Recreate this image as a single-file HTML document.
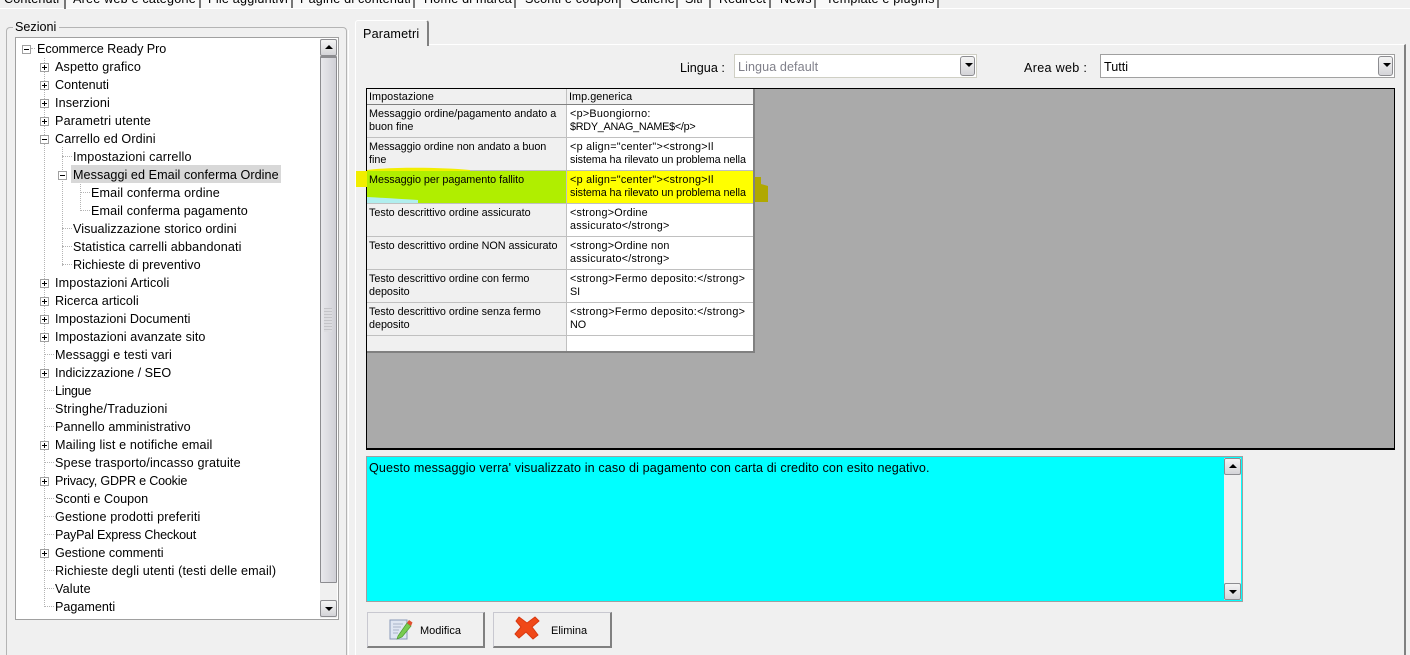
<!DOCTYPE html>
<html><head><meta charset="utf-8">
<style>
html,body{margin:0;padding:0;width:1410px;height:655px;overflow:hidden}
body{background:#f0f0f0;position:relative;font-family:"Liberation Sans",sans-serif;font-size:12px;color:#000}
.a{position:absolute;box-sizing:border-box}
.t{position:absolute;white-space:nowrap;line-height:14px;font-size:12.6px;transform:translateY(1px)}
.t.tr{transform:none;background:#fff;padding:0 1px;height:17px;line-height:19px}
.c{position:absolute;font-size:10.8px;line-height:13px;white-space:pre;box-sizing:border-box;padding-left:2px;color:#000;letter-spacing:-.03px;transform:translateY(1px)}
.exp{position:absolute;width:9px;height:9px;border:1px solid #a0a0a0;background:#fff;box-sizing:border-box}
.exp:before{content:"";position:absolute;left:1px;top:3px;width:5px;height:1px;background:#000}
.exp.p:after{content:"";position:absolute;left:3px;top:1px;width:1px;height:5px;background:#000}
.dh{position:absolute;height:1px;border-top:1px dotted #b4b4b4}
.dv{position:absolute;width:1px;border-left:1px dotted #b4b4b4}
.sb{position:absolute;width:17px;height:17px;box-sizing:border-box;border:1px solid #8c8c90;border-radius:2px;background:linear-gradient(#f4f4f4,#d4d4d8)}
.up:after{content:"";position:absolute;left:4px;top:5px;border:4px solid transparent;border-top:0;border-bottom:4px solid #000}
.dn:after{content:"";position:absolute;left:4px;top:6px;border:4px solid transparent;border-bottom:0;border-top:4px solid #000}
</style></head><body>

<!-- top tabs -->
<div class="a" style="left:0;top:8px;width:1410px;height:1px;background:#fff"></div>
<div class="a" style="left:65px;top:0;width:873px;height:8px;background:#f9f9f9"></div>
<div class="a" style="left:64px;top:0;width:2px;height:9px;background:#777"></div>
<div class="a" style="left:199px;top:0;width:2px;height:8px;background:#777"></div>
<div class="a" style="left:291px;top:0;width:2px;height:8px;background:#777"></div>
<div class="a" style="left:413px;top:0;width:2px;height:8px;background:#777"></div>
<div class="a" style="left:514px;top:0;width:2px;height:8px;background:#777"></div>
<div class="a" style="left:619px;top:0;width:2px;height:8px;background:#777"></div>
<div class="a" style="left:676px;top:0;width:2px;height:8px;background:#777"></div>
<div class="a" style="left:709px;top:0;width:2px;height:8px;background:#777"></div>
<div class="a" style="left:769px;top:0;width:2px;height:8px;background:#777"></div>
<div class="a" style="left:814px;top:0;width:2px;height:8px;background:#777"></div>
<div class="a" style="left:937px;top:0;width:2px;height:8px;background:#777"></div>
<div class="t" style="left:4px;top:-9px;letter-spacing:.15px">Contenuti</div>
<div class="t" style="left:73px;top:-9px;letter-spacing:.2px">Aree web e categorie</div>
<div class="t" style="left:208px;top:-9px;letter-spacing:.2px">File aggiuntivi</div>
<div class="t" style="left:300px;top:-9px;letter-spacing:.2px">Pagine di contenuti</div>
<div class="t" style="left:424px;top:-9px;letter-spacing:.2px">Home di marca</div>
<div class="t" style="left:525px;top:-9px;letter-spacing:.2px">Sconti e coupon</div>
<div class="t" style="left:630px;top:-9px;letter-spacing:.2px">Gallerie</div>
<div class="t" style="left:685px;top:-9px">Siti</div>
<div class="t" style="left:719px;top:-9px">Redirect</div>
<div class="t" style="left:780px;top:-9px">News</div>
<div class="t" style="left:826px;top:-9px;letter-spacing:.2px">Template e plugins</div>

<!-- left group box -->
<div class="a" style="left:6px;top:27px;width:341px;height:628px;border:1px solid #b4b4b4;border-bottom:0;border-radius:4px 4px 0 0"></div>
<div class="a" style="left:348px;top:30px;width:1px;height:625px;background:#fff"></div>
<div class="t" style="left:13px;top:19px;background:#f0f0f0;padding:0 3px 0 2px">Sezioni</div>

<!-- tree -->
<div class="a" style="left:15px;top:37px;width:324px;height:583px;border:1px solid #a0a0a0;background:#fff"></div>
<div class="dv" style="left:44px;top:54px;height:553px"></div>
<div class="dv" style="left:62px;top:146px;height:120px"></div>
<div class="dv" style="left:80px;top:182px;height:29px"></div>
<div class="dh" style="left:31px;top:48px;width:6px"></div>
<div class="dh" style="left:44px;top:390px;width:10px"></div>
<div class="dh" style="left:44px;top:408px;width:10px"></div>
<div class="dh" style="left:44px;top:426px;width:10px"></div>
<div class="dh" style="left:44px;top:462px;width:10px"></div>
<div class="dh" style="left:44px;top:498px;width:10px"></div>
<div class="dh" style="left:44px;top:516px;width:10px"></div>
<div class="dh" style="left:44px;top:534px;width:10px"></div>
<div class="dh" style="left:44px;top:570px;width:10px"></div>
<div class="dh" style="left:44px;top:588px;width:10px"></div>
<div class="dh" style="left:44px;top:606px;width:10px"></div>
<div class="dh" style="left:44px;top:354px;width:10px"></div>
<div class="dh" style="left:62px;top:156px;width:10px"></div>
<div class="dh" style="left:62px;top:228px;width:10px"></div>
<div class="dh" style="left:62px;top:246px;width:10px"></div>
<div class="dh" style="left:62px;top:264px;width:10px"></div>
<div class="dh" style="left:80px;top:192px;width:10px"></div>
<div class="dh" style="left:80px;top:210px;width:10px"></div>

<div class="exp" style="left:22px;top:45px"></div>
<div class="exp p" style="left:40px;top:63px"></div>
<div class="exp p" style="left:40px;top:81px"></div>
<div class="exp p" style="left:40px;top:99px"></div>
<div class="exp p" style="left:40px;top:117px"></div>
<div class="exp" style="left:40px;top:135px"></div>
<div class="exp" style="left:58px;top:171px"></div>
<div class="exp p" style="left:40px;top:279px"></div>
<div class="exp p" style="left:40px;top:297px"></div>
<div class="exp p" style="left:40px;top:315px"></div>
<div class="exp p" style="left:40px;top:333px"></div>
<div class="exp p" style="left:40px;top:369px"></div>
<div class="exp p" style="left:40px;top:441px"></div>
<div class="exp p" style="left:40px;top:477px"></div>
<div class="exp p" style="left:40px;top:549px"></div>

<div class="t tr" style="left:36px;top:40px;letter-spacing:-.05px">Ecommerce Ready Pro</div>
<div class="t tr" style="left:54px;top:58px;letter-spacing:.13px">Aspetto grafico</div>
<div class="t tr" style="left:54px;top:76px">Contenuti</div>
<div class="t tr" style="left:54px;top:94px;letter-spacing:.1px">Inserzioni</div>
<div class="t tr" style="left:54px;top:112px;letter-spacing:.18px">Parametri utente</div>
<div class="t tr" style="left:54px;top:130px;letter-spacing:.11px">Carrello ed Ordini</div>
<div class="t tr" style="left:72px;top:148px;letter-spacing:.15px">Impostazioni carrello</div>
<div class="t tr" style="left:71px;top:165px;height:18px;line-height:21px;width:210px;box-sizing:border-box;background:#d8d8d8;padding-left:2px;letter-spacing:.06px">Messaggi ed Email conferma Ordine</div>
<div class="t tr" style="left:90px;top:184px;letter-spacing:.14px">Email conferma ordine</div>
<div class="t tr" style="left:90px;top:202px;letter-spacing:.12px">Email conferma pagamento</div>
<div class="t tr" style="left:72px;top:220px;letter-spacing:.07px">Visualizzazione storico ordini</div>
<div class="t tr" style="left:72px;top:238px;letter-spacing:.13px">Statistica carrelli abbandonati</div>
<div class="t tr" style="left:72px;top:256px;letter-spacing:.04px">Richieste di preventivo</div>
<div class="t tr" style="left:54px;top:274px;letter-spacing:.15px">Impostazioni Articoli</div>
<div class="t tr" style="left:54px;top:292px;letter-spacing:.07px">Ricerca articoli</div>
<div class="t tr" style="left:54px;top:310px;letter-spacing:.05px">Impostazioni Documenti</div>
<div class="t tr" style="left:54px;top:328px;letter-spacing:.08px">Impostazioni avanzate sito</div>
<div class="t tr" style="left:54px;top:346px;letter-spacing:.1px">Messaggi e testi vari</div>
<div class="t tr" style="left:54px;top:364px">Indicizzazione / SEO</div>
<div class="t tr" style="left:54px;top:382px;letter-spacing:-.3px">Lingue</div>
<div class="t tr" style="left:54px;top:400px;letter-spacing:.2px">Stringhe/Traduzioni</div>
<div class="t tr" style="left:54px;top:418px;letter-spacing:.09px">Pannello amministrativo</div>
<div class="t tr" style="left:54px;top:436px;letter-spacing:.14px">Mailing list e notifiche email</div>
<div class="t tr" style="left:54px;top:454px;letter-spacing:.16px">Spese trasporto/incasso gratuite</div>
<div class="t tr" style="left:54px;top:472px;letter-spacing:-.22px">Privacy, GDPR e Cookie</div>
<div class="t tr" style="left:54px;top:490px">Sconti e Coupon</div>
<div class="t tr" style="left:54px;top:508px;letter-spacing:.15px">Gestione prodotti preferiti</div>
<div class="t tr" style="left:54px;top:526px;letter-spacing:-.2px">PayPal Express Checkout</div>
<div class="t tr" style="left:54px;top:544px">Gestione commenti</div>
<div class="t tr" style="left:54px;top:562px;letter-spacing:.15px">Richieste degli utenti (testi delle email)</div>
<div class="t tr" style="left:54px;top:580px;letter-spacing:.16px">Valute</div>
<div class="t tr" style="left:54px;top:598px">Pagamenti</div>

<!-- tree scrollbar -->
<div class="a" style="left:320px;top:39px;width:17px;height:579px;background:#f0f0f0"></div>
<div class="sb up" style="left:320px;top:39px"></div>
<div class="a" style="left:320px;top:56px;width:17px;height:527px;border:1px solid #8c8c90;border-top:2px solid #8c8c90;border-radius:1px;background:linear-gradient(90deg,#e8e8ec,#d0d0d6)"></div>
<div class="sb dn" style="left:320px;top:600px"></div>

<!-- splitter grip -->
<div class="a" style="left:324px;top:308px;width:8px;height:24px;background:repeating-linear-gradient(#c4c4c8 0 1px,#dcdce0 1px 3px)"></div>

<!-- right panel -->
<div class="a" style="left:355px;top:44px;width:1051px;height:611px;border-left:1px solid #fff;border-top:1px solid #fff;border-right:2px solid #808080"></div>
<div class="a" style="left:355px;top:20px;width:74px;height:26px;background:#f0f0f0;border:1px solid #fff;border-bottom:0;border-right:2px solid #808080;border-radius:3px 3px 0 0"></div>
<div class="t" style="left:363px;top:26px;letter-spacing:.2px">Parametri</div>

<!-- combos -->
<div class="t" style="left:680px;top:60px">Lingua :</div>
<div class="a" style="left:734px;top:54px;width:243px;height:24px;background:#fff;border:1px solid #cfcfc4"></div>
<div class="t" style="left:738px;top:59px;color:#80808a;letter-spacing:.08px">Lingua default</div>
<div class="sb dn" style="left:960px;top:56px;width:15px;height:20px;border-radius:3px"></div>
<div class="t" style="left:1024px;top:60px;letter-spacing:.3px">Area web :</div>
<div class="a" style="left:1100px;top:54px;width:295px;height:24px;background:#fff;border:1px solid #a0a0a0"></div>
<div class="t" style="left:1104px;top:59px">Tutti</div>
<div class="sb dn" style="left:1378px;top:56px;width:15px;height:20px;border-radius:3px"></div>

<!-- grid -->
<div class="a" style="left:366px;top:88px;width:1029px;height:362px;background:#aaa;border:1px solid #000;border-bottom-width:2px;border-right-width:1px"></div>
<div class="a" style="left:367px;top:89px;width:388px;height:264px;background:#fff;border-right:2px solid #808080;border-bottom:2px solid #808080"></div>
<div class="a" style="left:367px;top:89px;width:199px;height:262px;background:#f0f0f0"></div>
<div class="a" style="left:566px;top:89px;width:187px;height:15px;background:#f0f0f0"></div>
<div class="a" style="left:566px;top:89px;width:1px;height:262px;background:#c0c0c0"></div>
<div class="a" style="left:367px;top:104px;width:386px;height:1px;background:#808080"></div>
<div class="a" style="left:367px;top:137px;width:386px;height:1px;background:#c0c0c0"></div>
<div class="a" style="left:367px;top:170px;width:386px;height:1px;background:#c0c0c0"></div>
<div class="a" style="left:367px;top:203px;width:386px;height:1px;background:#c0c0c0"></div>
<div class="a" style="left:367px;top:236px;width:386px;height:1px;background:#c0c0c0"></div>
<div class="a" style="left:367px;top:269px;width:386px;height:1px;background:#c0c0c0"></div>
<div class="a" style="left:367px;top:302px;width:386px;height:1px;background:#c0c0c0"></div>
<div class="a" style="left:367px;top:335px;width:386px;height:1px;background:#c0c0c0"></div>

<!-- highlights -->
<svg class="a" style="left:350px;top:160px" width="430" height="50">
<path d="M6 11H17V27H6Z" fill="#f2ee00"/>
<path d="M17 11V10C40 7 90 7 120 10V11Z" fill="#f2ee00"/>
<path d="M17 11H216V43H17Z" fill="#b0ee00"/>
<path d="M17 37C35 38 50 39 68 40V43H17Z" fill="#b0eeee"/>
<path d="M217 11H403V43H217Z" fill="#ffff00"/>
<path d="M405 17L411 17 411 24 418 26V42H405Z" fill="#b0a800"/>
</svg>

<div class="c" style="left:367px;top:90px;letter-spacing:.06px">Impostazione</div>
<div class="c" style="left:567px;top:90px;letter-spacing:.06px">Imp.generica</div>
<div class="c" style="left:367px;top:107px;letter-spacing:0">Messaggio ordine/pagamento andato a
buon fine</div>
<div class="c" style="left:568px;top:107px"><span style="letter-spacing:.27px">&lt;p&gt;Buongiorno:</span>
<span style="letter-spacing:-.25px">$RDY_ANAG_NAME$&lt;/p&gt;</span></div>
<div class="c" style="left:367px;top:140px">Messaggio ordine non andato a buon
fine</div>
<div class="c" style="left:568px;top:140px"><span style="letter-spacing:.26px">&lt;p align="center"&gt;&lt;strong&gt;Il</span>
<span style="letter-spacing:-.08px">sistema ha rilevato un problema nella</span></div>
<div class="c" style="left:367px;top:173px">Messaggio per pagamento fallito</div>
<div class="c" style="left:568px;top:173px"><span style="letter-spacing:.26px">&lt;p align="center"&gt;&lt;strong&gt;Il</span>
<span style="letter-spacing:-.08px">sistema ha rilevato un problema nella</span></div>
<div class="c" style="left:367px;top:206px">Testo descrittivo ordine assicurato</div>
<div class="c" style="left:568px;top:206px"><span style="letter-spacing:.2px">&lt;strong&gt;Ordine</span>
<span style="letter-spacing:.25px">assicurato&lt;/strong&gt;</span></div>
<div class="c" style="left:367px;top:239px">Testo descrittivo ordine NON assicurato</div>
<div class="c" style="left:568px;top:239px"><span style="letter-spacing:.2px">&lt;strong&gt;Ordine non</span>
<span style="letter-spacing:.25px">assicurato&lt;/strong&gt;</span></div>
<div class="c" style="left:367px;top:272px">Testo descrittivo ordine con fermo
deposito</div>
<div class="c" style="left:568px;top:272px"><span style="letter-spacing:.28px">&lt;strong&gt;Fermo deposito:&lt;/strong&gt;</span>
SI</div>
<div class="c" style="left:367px;top:305px">Testo descrittivo ordine senza fermo
deposito</div>
<div class="c" style="left:568px;top:305px"><span style="letter-spacing:.28px">&lt;strong&gt;Fermo deposito:&lt;/strong&gt;</span>
NO</div>

<!-- memo -->
<div class="a" style="left:366px;top:456px;width:877px;height:146px;background:#00ffff;border:1px solid #a0a0a0"></div>
<div class="t" style="left:369px;top:460px;font-size:12.6px;letter-spacing:.11px">Questo messaggio verra' visualizzato in caso di pagamento con carta di credito con esito negativo.</div>
<div class="a" style="left:1224px;top:458px;width:17px;height:142px;background:#f0f0f0"></div>
<div class="sb up" style="left:1224px;top:458px"></div>
<div class="sb dn" style="left:1224px;top:583px"></div>

<!-- buttons -->
<div class="a" style="left:367px;top:612px;width:118px;height:36px;background:#f0f0f0;border:1px solid #c8c8d0;border-right:2px solid #808080;border-bottom:2px solid #808080"></div>
<svg class="a" style="left:388px;top:616px" width="26" height="26" viewBox="0 0 26 26">
<path d="M2 4H19V23H2Z" fill="#dfe6f2" stroke="#8a9ab8"/>
<path d="M5 8H15M5 11H13M5 14H11M5 17H10" stroke="#aab4c8"/>
<path d="M10 20L19 7 23 10 14 21 9 23Z" fill="#78cc50" stroke="#4c9c30" stroke-width=".7"/>
<path d="M19 7L21 4 24.500 6.500 23 10Z" fill="#e05030"/>
</svg>
<div class="t" style="left:420px;top:623px;font-size:11px">Modifica</div>
<div class="a" style="left:493px;top:612px;width:119px;height:36px;background:#f0f0f0;border:1px solid #c8c8d0;border-right:2px solid #808080;border-bottom:2px solid #808080"></div>
<svg class="a" style="left:514px;top:616px" width="26" height="24" viewBox="0 0 26 24">
<path d="M5 1L13 7 21 1 25 5 18 11 24 19 19 23 12 16 5 22 1 18 7 11 2 5Z" fill="#f04818" stroke="#d83810" stroke-linejoin="round" stroke-width="1"/>
</svg>
<div class="t" style="left:551px;top:623px;font-size:11px">Elimina</div>

</body></html>
